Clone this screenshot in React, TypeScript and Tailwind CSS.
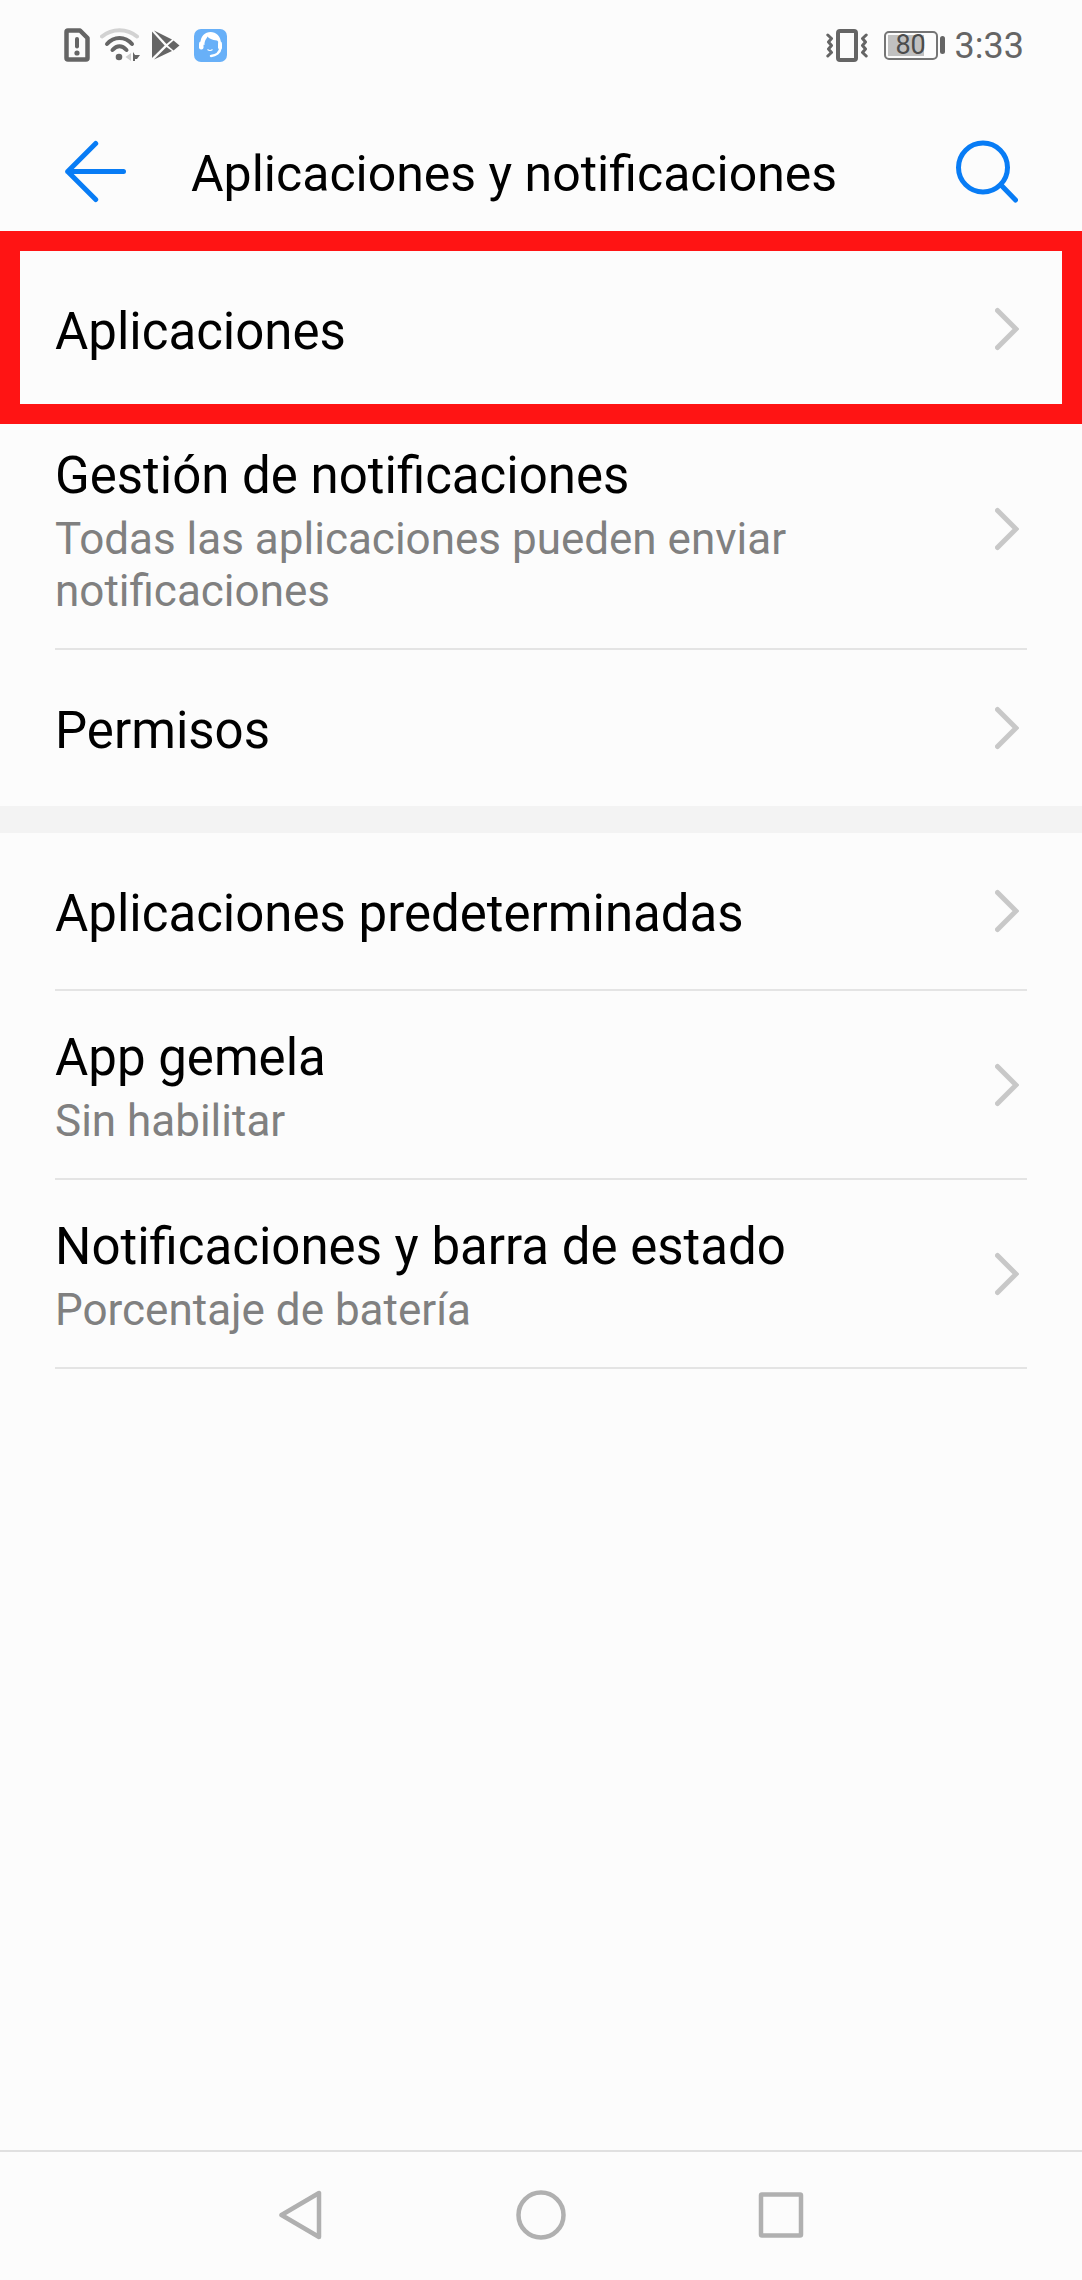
interface SettingRowProps {
    title: string;
    summary?: string;
    highlighted?: boolean;
    noDivider?: boolean;
}

function SettingRow({ title, summary, highlighted, noDivider }: SettingRowProps) {
    return (
        <li className="relative px-[55px]">
            <button
                type="button"
                className={`flex w-full py-[31px] items-center justify-between gap-6 text-left ${noDivider ? "min-h-[156px]" : "min-h-[158px] border-b-2 border-[#e4e4e4]"}`}
            >
                <span className="flex flex-col gap-[7px] pt-1.5">
                    <span className="text-[51px] leading-[60px] text-black">{title}</span>
                    {summary && <span className="text-[44px] leading-[52px] text-[#808080]">{summary}</span>}
                </span>
                <svg className="w-6 h-11 mr-2 shrink-0" viewBox="0 0 24 44" fill="none" stroke="#c8c8c8" strokeWidth="5" strokeLinecap="round" aria-hidden="true">
                    <path d="M2.5 3.5 21 22 2.5 40.5" />
                </svg>
            </button>
            {highlighted && <div className="absolute inset-x-0 -top-5 -bottom-[15px] z-10 border-[20px] border-[#ff1414] pointer-events-none" />}
        </li>
    );
}

function StatusBar() {
    return (
        <div className="flex h-[90px] items-center justify-between pl-16 pr-[58px] text-[#656565]">
            <div className="flex items-center">
                {/* sim */}
                <svg className="w-[26px] h-[34px] mr-[10px]" viewBox="0 0 26 34" fill="none" aria-hidden="true">
                    <path d="M4 2.5H16L23.5 10V30A1.5 1.5 0 0 1 22 31.5H4A1.5 1.5 0 0 1 2.5 30V4A1.5 1.5 0 0 1 4 2.5Z" stroke="currentColor" strokeWidth="4.5" strokeLinejoin="round" />
                    <path d="M13 11V18.5" stroke="currentColor" strokeWidth="4" strokeLinecap="round" />
                    <circle cx="13" cy="25" r="2.6" fill="currentColor" />
                </svg>
                {/* wifi */}
                <svg className="w-10 h-[34px] mr-3" viewBox="0 0 40 34" fill="none" strokeLinecap="round" aria-hidden="true">
                    <path d="M2 8.5C12 0 27 0 37 8.5" stroke="#d2d2d2" strokeWidth="4" />
                    <path d="M7 16C14 8 25 8 32 16" stroke="currentColor" strokeWidth="4" />
                    <path d="M12.5 22C17 17 22 17 26.5 22" stroke="currentColor" strokeWidth="4" />
                    <circle cx="19" cy="29" r="3.3" fill="currentColor" />
                    <path d="M31 25V33L25.5 29Z" fill="#cfcfcf" />
                    <path d="M33 24 35 27H40L37 31H35V33H33Z" fill="currentColor" />
                </svg>
                {/* play store */}
                <svg className="w-7 h-[34px] mr-[14px]" viewBox="0 0 28 34" fill="currentColor" aria-hidden="true">
                    <path d="M0 3.5V30L12.7 17.5Z" />
                    <path d="M2 2.5 20 11.5 14.5 16Z" />
                    <path d="M2 31.5 20 23 14.5 19Z" />
                    <path d="M21.5 12.5 27.5 17.5 21.5 22.5 15.8 17.5Z" />
                </svg>
                {/* support app */}
                <svg className="w-[33px] h-[34px]" viewBox="0 0 33 34" fill="none" aria-hidden="true">
                    <rect y="1" width="33" height="33" rx="7" fill="#68b0f8" />
                    <path d="M6.5 16C5.5 0 27.5 0 27 16H24.5C24.5 14 24 13 23 12.5C18 12 15 10.5 13.5 8.5C12.5 11 10.5 12 10.5 17Z" fill="#fff" />
                    <rect x="5" y="13.5" width="4.5" height="8" rx="2" fill="#fff" />
                    <rect x="24" y="13.5" width="4" height="8" rx="2" fill="#fff" />
                    <path d="M26.5 20C26 24.5 22 27.5 17 28" stroke="#fff" strokeWidth="2.5" strokeLinecap="round" />
                    <path d="M13.5 21.5Q16 23.5 18.5 21.5" stroke="#fff" strokeWidth="1.2" />
                </svg>
            </div>
            <div className="flex items-center">
                {/* vibrate */}
                <svg className="w-[42px] h-[34px] mr-4" viewBox="0 0 42 34" fill="none" stroke="currentColor" strokeLinecap="round" strokeLinejoin="round" aria-hidden="true">
                    <rect x="12" y="3" width="18" height="29" rx="2" strokeWidth="4" />
                    <path d="M1.8 7 5.5 10.5 2.5 14 5.5 17.5 2.5 21 5.5 24.5 1.8 28" strokeWidth="3" />
                    <path d="M40.2 7 36.5 10.5 39.5 14 36.5 17.5 39.5 21 36.5 24.5 40.2 28" strokeWidth="3" />
                </svg>
                <div className="relative flex w-[54px] h-[29px] items-center justify-center rounded-[5px] border-2 border-[#757575]">
                    <div className="absolute inset-y-0.5 left-0.5 w-9 bg-[#c0c0c0]" />
                    <span className="relative text-[27px] leading-7 text-[#4c4c4c]">80</span>
                </div>
                <div className="ml-0.5 w-[5px] h-[18px] rounded-sm bg-[#656565]" />
                <span className="ml-[10px] pt-0.5 text-[36px] leading-[42px]">3:33</span>
            </div>
        </div>
    );
}

export default function App() {
    return (
        <div className="flex min-h-screen flex-col bg-[#fcfcfc] font-[Roboto,'Noto_Sans',sans-serif]">
            <StatusBar />
            <header className="flex h-[161px] items-center px-16">
                <button type="button" aria-label="Atrás" className="shrink-0">
                    <svg className="w-16 h-16" viewBox="0 0 64 64" fill="none" stroke="#087cf5" strokeWidth="5" strokeLinecap="round" strokeLinejoin="round">
                        <path d="M31.7 4.5 3.7 32.5 31.7 60.5M3.7 32.5H59.5" />
                    </svg>
                </button>
                <h1 className="ml-[63px] flex-1 pt-1.5 text-[50px] leading-[60px] text-black">Aplicaciones y notificaciones</h1>
                <button type="button" aria-label="Buscar" className="shrink-0">
                    <svg className="w-16 h-16" viewBox="0 0 64 64" fill="none" stroke="#087cf5" strokeWidth="5" strokeLinecap="round">
                        <circle cx="29" cy="28.5" r="24.5" />
                        <path d="M47 46 61.5 61" />
                    </svg>
                </button>
            </header>

            <main>
                <ul>
                    <SettingRow title="Aplicaciones" highlighted />
                    <SettingRow title="Gestión de notificaciones" summary="Todas las aplicaciones pueden enviar notificaciones" />
                    <SettingRow title="Permisos" noDivider />
                </ul>
                <div className="h-[27px] bg-[#f3f3f3]" />
                <ul>
                    <SettingRow title="Aplicaciones predeterminadas" />
                    <SettingRow title="App gemela" summary="Sin habilitar" />
                    <SettingRow title="Notificaciones y barra de estado" summary="Porcentaje de batería" />
                </ul>
            </main>

            <nav className="mt-auto flex h-[130px] items-center justify-center gap-[190px] border-t-2 border-[#e0e0e0] pb-0.5">
                <button type="button" aria-label="Volver">
                    <svg className="w-[50px] h-[50px]" viewBox="0 0 50 50" fill="none" stroke="#b0b0b0" strokeWidth="4.5" strokeLinejoin="round">
                        <path d="M43 3V47L5.5 25Z" />
                    </svg>
                </button>
                <button type="button" aria-label="Inicio">
                    <svg className="w-[50px] h-[50px]" viewBox="0 0 50 50" fill="none" stroke="#b0b0b0" strokeWidth="4.5">
                        <circle cx="25" cy="25" r="22.5" />
                    </svg>
                </button>
                <button type="button" aria-label="Recientes">
                    <svg className="w-[50px] h-[50px]" viewBox="0 0 50 50" fill="none" stroke="#b0b0b0" strokeWidth="4.5" strokeLinejoin="round">
                        <rect x="5" y="4.5" width="40" height="41" rx="1" />
                    </svg>
                </button>
            </nav>
        </div>
    );
}
